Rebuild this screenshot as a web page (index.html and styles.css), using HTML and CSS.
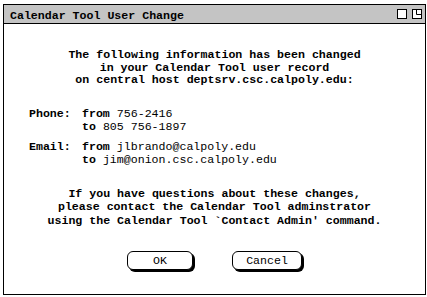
FILE: index.html
```html
<!DOCTYPE html>
<html lang="en">
<head>
  <meta charset="UTF-8" />
  <title>Calendar Tool User Change</title>
  <link rel="stylesheet" href="styles.css">
</head>
<body>
  <div class="window">
    <div class="titlebar">
      <span class="title">Calendar Tool User Change</span>
      <span class="controls">
        <svg width="10" height="10" viewBox="0 0 10 10"><rect x="0.5" y="0.5" width="9" height="9" fill="white" stroke="black"/></svg>
        <svg width="10" height="10" viewBox="0 0 10 10"><rect x="0.5" y="0.5" width="9" height="9" fill="white" stroke="black"/><path d="M4.5 0.5 V5.5 H9.5" fill="none" stroke="black"/></svg>
      </span>
    </div>

    <div class="content">
      <p class="notice">The following information has been changed<br>in your Calendar Tool user record<br>on central host deptsrv.csc.calpoly.edu:</p>

      <div class="changes">
        <div class="group">
          <div class="row"><span class="label">Phone:</span><b>from</b> <span class="val">756-2416</span></div>
          <div class="row"><span class="label"></span><b>to</b> <span class="val">805 756-1897</span></div>
        </div>
        <div class="group">
          <div class="row"><span class="label">Email:</span><b>from</b> <span class="val">jlbrando@calpoly.edu</span></div>
          <div class="row"><span class="label"></span><b>to</b> <span class="val">jim@onion.csc.calpoly.edu</span></div>
        </div>
      </div>

      <p class="notice bottom">If you have questions about these changes,<br>please contact the Calendar Tool adminstrator<br>using the Calendar Tool `Contact Admin' command.</p>

      <div class="buttons">
        <button class="btn ok">OK</button>
        <button class="btn cancel">Cancel</button>
      </div>
    </div>
  </div>
</body>
</html>
```

FILE: styles.css
```css
body {
  margin: 0;
  background: white;
  font-family: 'Liberation Mono', 'DejaVu Sans Mono', monospace;
  font-size: 11.6px;
  color: black;
}
.window {
  margin: 4px 0 0 3px;
  width: 423px;
  height: 291px;
  box-sizing: border-box;
  border: 1px solid black;
  display: flex;
  flex-direction: column;
}
.titlebar {
  height: 18px;
  background: #c4c4c4;
  border-bottom: 1px solid black;
  display: flex;
  align-items: center;
  justify-content: space-between;
  padding: 0 3px 0 6px;
}
.title {
  font-weight: bold;
  padding-top: 2px;
}
.controls {
  display: flex;
  gap: 5px;
}
.controls svg {
  display: block;
}
.content {
  padding-top: 25px;
}
.notice {
  margin: 0;
  text-align: center;
  font-weight: bold;
  line-height: 12.5px;
}
.changes {
  margin-top: 20px;
  padding-left: 25px;
  line-height: 13px;
}
.group + .group {
  margin-top: 7px;
}
.label {
  display: inline-block;
  width: 53px;
  font-weight: bold;
}
.notice.bottom {
  margin-top: 21px;
  line-height: 13.5px;
}
.buttons {
  margin-top: 24px;
  display: flex;
  justify-content: center;
  gap: 39px;
}
.btn {
  height: 19px;
  padding: 0;
  background: white;
  border: 1px solid black;
  border-radius: 6px;
  box-shadow: 2px 2px 0 black;
  font-family: 'Liberation Mono', monospace;
  font-size: 11.6px;
  color: black;
}
.btn.ok {
  width: 66px;
}
.btn.cancel {
  width: 70px;
}
```
